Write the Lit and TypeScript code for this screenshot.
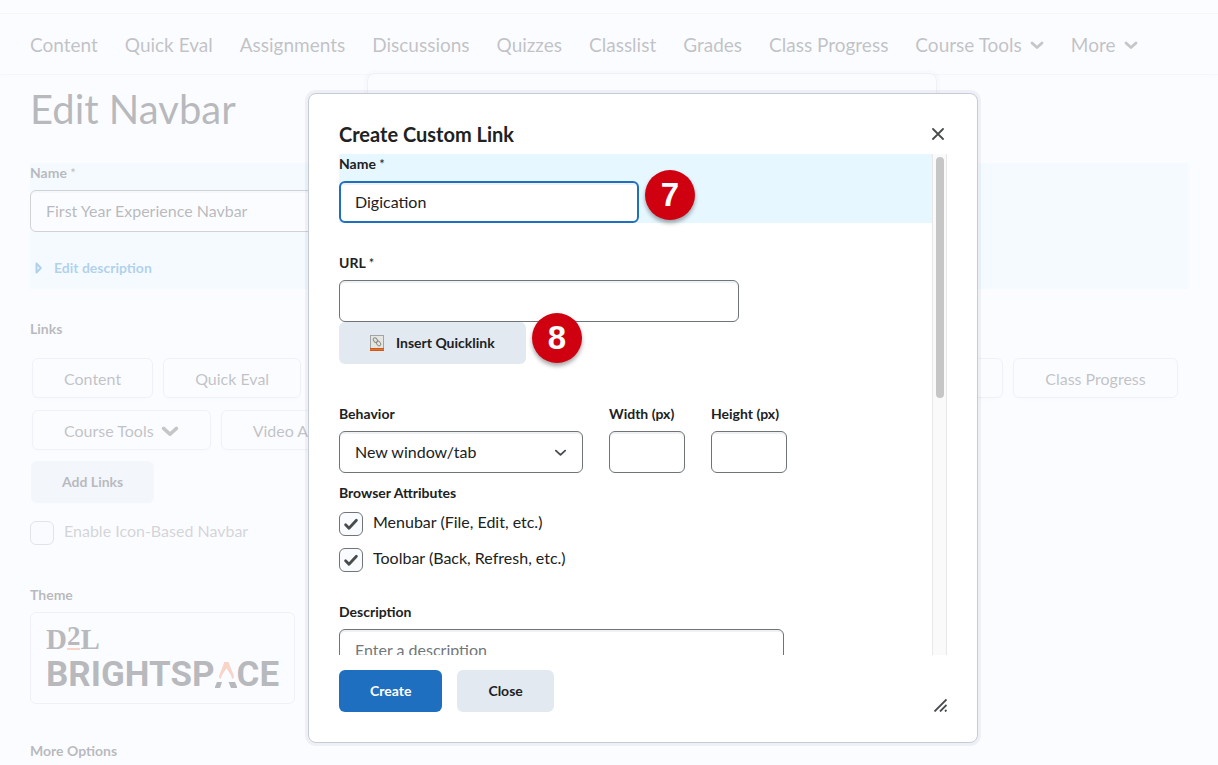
import { LitElement, html, css, svg } from "lit";
import { customElement, property, state } from "lit/decorators.js";
import { styleMap } from "lit/directives/style-map.js";

const base = css`
  *,
  *::before,
  *::after {
    box-sizing: border-box;
  }
  button,
  input,
  select,
  textarea {
    font: inherit;
    color: inherit;
    margin: 0;
  }
  .label {
    display: block;
    font-size: 14px;
    font-weight: 700;
    line-height: 20px;
    margin: 0 0 7px;
  }
  .required {
    font-size: 13px;
    font-weight: 400;
  }
  .field {
    display: block;
    height: 42px;
    padding: 0 15px 2px;
    border: 1px solid #6e7477;
    border-radius: 6px;
    background: #fff;
    box-shadow: inset 0 2px 0 rgba(177, 185, 190, 0.2);
    font-size: 16px;
    line-height: 24px;
  }
  .button {
    display: inline-flex;
    align-items: center;
    justify-content: center;
    height: 42px;
    padding: 0 31px;
    border: 0;
    border-radius: 6px;
    background: #e3e9f1;
    font-size: 14px;
    font-weight: 700;
    line-height: 20px;
    white-space: nowrap;
  }
  .check {
    display: flex;
    align-items: flex-start;
    gap: 10px;
    font-size: 16px;
    line-height: 20px;
  }
  .check input {
    appearance: none;
    width: 24px;
    height: 24px;
    border: 1px solid #6e7477;
    border-radius: 6px;
    background: #f9fbff center / 22px 22px no-repeat;
  }
  .check input:checked {
    background-image: url("data:image/svg+xml,%3Csvg xmlns='http://www.w3.org/2000/svg' viewBox='0 0 22 22'%3E%3Cpath d='M5.6 11.7l3.4 3.5 7.4-7.9' fill='none' stroke='%23494c4e' stroke-width='2.8' stroke-linecap='round' stroke-linejoin='round'/%3E%3C/svg%3E");
  }
`;

const chevron = (size: number, width: number) => html`
  <svg width=${size} height=${size} viewBox="0 0 14 14" aria-hidden="true">
    ${svg`<path d="M2 5l5 4.500 5-4.500" fill="none" stroke="#494c4e" stroke-width=${width} stroke-linecap="round" stroke-linejoin="round"/>`}
  </svg>
`;

@customElement("course-nav")
class CourseNav extends LitElement {
  static styles = [
    base,
    css`
      :host {
        display: block;
        padding-top: 13px;
      }
      .bar {
        display: flex;
        align-items: center;
        gap: 27px;
        height: 62px;
        padding: 2px 30px 0;
        border-top: 1px solid #e6eaf0;
        border-bottom: 1px solid #e6eaf0;
        box-shadow: 0 2px 3px rgba(0, 0, 0, 0.02);
        white-space: nowrap;
      }
      .item {
        display: flex;
        align-items: center;
        gap: 8px;
        padding: 0;
        border: 0;
        background: none;
        color: #3c3e40;
        font-size: 19px;
        line-height: 28px;
        text-decoration: none;
      }
    `,
  ];

  private links = ["Content", "Quick Eval", "Assignments", "Discussions", "Quizzes", "Classlist", "Grades", "Class Progress"];
  private menus = ["Course Tools", "More"];

  render() {
    return html`<nav class="bar">
      ${this.links.map((l) => html`<a class="item" href="#">${l}</a>`)}
      ${this.menus.map((m) => html`<button class="item">${m} ${chevron(14, 2.8)}</button>`)}
    </nav>`;
  }
}

@customElement("navbar-editor")
class NavbarEditor extends LitElement {
  static styles = [
    base,
    css`
      :host {
        display: block;
        padding: 10px 30px 0;
      }
      .title {
        margin: 0;
        font-size: 40px;
        font-weight: 400;
        line-height: 48px;
      }
      .basics {
        margin-top: 30px;
        padding-bottom: 11px;
        background: #e8f8ff;
      }
      .name {
        width: 50%;
      }
      .expand {
        display: flex;
        align-items: center;
        gap: 12px;
        margin-top: 26px;
        padding: 0 5px;
        border: 0;
        background: none;
        color: #006fbf;
        font-size: 14px;
        font-weight: 700;
        line-height: 20px;
      }
      .section {
        margin-top: 30px;
      }
      .chips {
        display: flex;
        flex-wrap: wrap;
        gap: 12px 10px;
        margin: 19px 0 11px;
        padding: 0 2px;
      }
      .chip {
        display: flex;
        align-items: center;
        gap: 7px;
        height: 40px;
        padding: 2px 31px 0;
        border: 1px solid #d3d9e3;
        border-radius: 6px;
        background: #fff;
        box-shadow: 0 2px 4px rgba(0, 0, 0, 0.03);
        color: #3c3e40;
        font-size: 16px;
        line-height: 24px;
        white-space: nowrap;
      }
      .add {
        margin-left: 1px;
      }
      .check {
        margin-top: 18px;
        opacity: 0.6;
      }
      .theme {
        margin-top: 40px;
      }
      .card {
        width: 265px;
        height: 92px;
        padding: 10px 15px;
        border: 1px solid #d3d9e3;
        border-radius: 6px;
        background: #fff;
      }
      .d2l {
        display: flex;
        height: 31px;
        font-family: "Liberation Serif", serif;
        font-size: 29px;
        font-weight: 700;
        line-height: 32px;
      }
      .two {
        height: 27px;
        border-bottom: 2px solid #f27b45;
        font-size: 27px;
        line-height: 27px;
      }
      .brand {
        display: flex;
        align-items: center;
        font-family: Roboto, sans-serif;
        font-size: 35px;
        font-weight: 700;
        line-height: 42px;
      }
      .brand svg {
        flex: none;
      }
      .more {
        margin-top: 37px;
      }
      .more .label {
        margin: 0;
      }
    `,
  ];

  private chips = ["Content", "Quick Eval", "Assignments", "Discussions", "Quizzes", "Classlist", "Grades", "Class Progress"];

  render() {
    return html`
      <h1 class="title">Edit Navbar</h1>
      <section class="basics">
        <label class="label" for="navbar-name">Name <span class="required">*</span></label>
        <input class="field name" id="navbar-name" value="First Year Experience Navbar" />
        <button class="expand">
          <svg width="7" height="12" viewBox="0 0 7 12" aria-hidden="true">
            <path d="M1.500 1.500v9L5.8 6z" fill="none" stroke="#006fbf" stroke-width="2" stroke-linejoin="round" />
          </svg>
          Edit description
        </button>
      </section>
      <section class="section">
        <h2 class="label">Links</h2>
        <div class="chips">
          ${this.chips.map((c) => html`<button class="chip">${c}</button>`)}
          <button class="chip">Course Tools ${chevron(18, 2.8)}</button>
          <button class="chip">Video Assignments</button>
        </div>
        <button class="button add">Add Links</button>
        <label class="check"><input type="checkbox" />Enable Icon-Based Navbar</label>
      </section>
      <section class="theme">
        <h2 class="label">Theme</h2>
        <div class="card">
          <div class="d2l">D<span class="two">2</span>L</div>
          <div class="brand">
            <span>BRIGHTSP</span>
            <svg width="22" height="26" viewBox="0 0 22 26" aria-hidden="true">
              <path d="M4 15.500C4 12 8 5 9.300 0h4.400C15 5 19 12 19 15.500L17 17C16.500 12 12.500 9 11.500 6 10.500 9 6.500 12 6 17z" fill="#f27b45" />
              <path d="M2 20h5l-2 6H-.5zM13.500 20h6.500l2.500 6H16z" fill="#202122" />
            </svg>
            <span>CE</span>
          </div>
        </div>
      </section>
      <section class="more"><h2 class="label">More Options</h2></section>
    `;
  }
}

@customElement("step-badge")
class StepBadge extends LitElement {
  @property() step = "";
  static styles = css`
    :host {
      display: flex;
      align-items: center;
      justify-content: center;
      width: 50px;
      height: 50px;
      border-radius: 50%;
      background: #cf0010;
      box-shadow: 0 3px 4px rgba(0, 0, 0, 0.35);
      color: #fff;
      font: 700 33px/50px "Liberation Sans", Arial, sans-serif;
    }
  `;
  render() {
    return html`${this.step}`;
  }
}

@customElement("custom-link-dialog")
class CustomLinkDialog extends LitElement {
  @state() private thumbSize = 49;
  @state() private thumbTop = 0;

  static styles = [
    base,
    css`
      :host {
        display: flex;
        flex-direction: column;
        box-sizing: border-box;
        padding: 26px 30px 30px;
        border: 1px solid #c5ccd8;
        border-radius: 8px;
        background: #fff;
        box-shadow: 0 0 0 3px rgba(70, 80, 110, 0.07);
      }
      .head {
        display: flex;
        align-items: center;
        justify-content: space-between;
        height: 28px;
        margin-bottom: 6px;
      }
      .title {
        margin: 0;
        font-size: 20px;
        font-weight: 700;
        line-height: 28px;
      }
      .icon-button {
        display: flex;
        padding: 3px;
        border: 0;
        background: none;
      }
      .body {
        display: flex;
        height: 501px;
      }
      .scroll {
        flex: 1;
        min-width: 0;
        overflow-y: auto;
        scrollbar-width: none;
      }
      .track {
        width: 15px;
        padding: 3px;
        border: solid #e8e8e8;
        border-width: 0 1px;
        background: #fafafa;
      }
      .thumb {
        position: relative;
        width: 8px;
        border-radius: 4px;
        background: #c6c6c6;
      }
      .name-row {
        background: #e6f7ff;
      }
      .name {
        width: 300px;
        border: 2px solid #1f6fc0;
        padding: 0 14px 2px;
      }
      .group {
        margin-top: 30px;
      }
      .url {
        width: 400px;
      }
      .quick {
        gap: 12px;
      }
      .window {
        display: flex;
        gap: 26px;
        margin-top: 40px;
      }
      .picker {
        display: grid;
        align-items: center;
      }
      .picker > * {
        grid-area: 1 / 1;
      }
      .picker svg {
        justify-self: end;
        margin-right: 16px;
        pointer-events: none;
      }
      .behavior {
        width: 244px;
        padding: 0 15px;
        appearance: none;
      }
      .size {
        width: 76px;
      }
      .attributes {
        display: grid;
        gap: 12px;
        margin: 10px 0 0;
        padding: 0;
        border: 0;
      }
      .attributes .label {
        margin: 0 0 9px;
        padding: 0;
      }
      .description {
        width: 445px;
        height: 556px;
        padding: 8px 15px;
        resize: none;
      }
      .description::placeholder {
        color: #72777a;
        opacity: 1;
      }
      .foot {
        display: flex;
        gap: 15px;
        margin-top: 15px;
      }
      .primary {
        background: #1f6fc0;
        color: #fff;
      }
      .grip {
        align-self: flex-end;
        margin-left: auto;
      }
    `,
  ];

  firstUpdated() {
    this.syncThumb();
  }

  private syncThumb() {
    const el = this.renderRoot.querySelector(".scroll") as HTMLElement;
    this.thumbSize = (el.clientHeight / el.scrollHeight) * 100;
    this.thumbTop = (el.scrollTop / el.scrollHeight) * (el.clientHeight - 6);
  }

  render() {
    return html`
      <header class="head">
        <h2 class="title">Create Custom Link</h2>
        <button class="icon-button" aria-label="Close dialog">
          <svg width="12" height="12" viewBox="0 0 12 12" aria-hidden="true">
            <path d="M1 1l10 10M11 1L1 11" stroke="#494c4e" stroke-width="1.8" stroke-linecap="round" />
          </svg>
        </button>
      </header>
      <div class="body">
        <div class="scroll" @scroll=${this.syncThumb}>
          <div class="name-row">
            <label class="label" for="name">Name <span class="required">*</span></label>
            <input class="field name" id="name" value="Digication" />
          </div>
          <div class="group">
            <label class="label" for="url">URL <span class="required">*</span></label>
            <input class="field url" id="url" />
            <button class="button quick">
              <svg width="14" height="16" viewBox="0 0 14 16" aria-hidden="true">
                <rect x=".5" y=".5" width="13" height="13" fill="#e6e6e0" stroke="#a2a5a8" />
                <path d="M0 13h14v3H0z" fill="#c9591c" />
                <path d="M0 14h14v1H0z" fill="#e8742a" />
                <g fill="none" stroke="#8a8a86" stroke-width="1">
                  <rect x="3.700" y="2.600" width="3.400" height="5" rx="1.700" transform="rotate(-40 5.400 5.100)" />
                  <rect x="6.900" y="6" width="3.400" height="5" rx="1.700" transform="rotate(-40 8.600 8.500)" />
                </g>
              </svg>
              Insert Quicklink
            </button>
          </div>
          <div class="window">
            <div>
              <label class="label" for="behavior">Behavior</label>
              <div class="picker">
                <select class="field behavior" id="behavior">
                  <option>New window/tab</option>
                </select>
                ${chevron(13, 2)}
              </div>
            </div>
            <div>
              <label class="label" for="width">Width (px)</label>
              <input class="field size" id="width" />
            </div>
            <div>
              <label class="label" for="height">Height (px)</label>
              <input class="field size" id="height" />
            </div>
          </div>
          <fieldset class="attributes">
            <legend class="label">Browser Attributes</legend>
            <label class="check"><input type="checkbox" checked />Menubar (File, Edit, etc.)</label>
            <label class="check"><input type="checkbox" checked />Toolbar (Back, Refresh, etc.)</label>
          </fieldset>
          <div class="group">
            <label class="label" for="description">Description</label>
            <textarea class="field description" id="description" placeholder="Enter a description"></textarea>
          </div>
        </div>
        <div class="track">
          <div class="thumb" style=${styleMap({ height: `${this.thumbSize}%`, top: `${this.thumbTop}px` })}></div>
        </div>
      </div>
      <footer class="foot">
        <button class="button primary">Create</button>
        <button class="button">Close</button>
        <svg class="grip" width="14" height="14" viewBox="0 0 14 14" aria-hidden="true">
          <path d="M1.500 13.500L13.500 1.500M7 13.500L13.500 7M12 13.500L13.500 12" stroke="#494c4e" stroke-width="1.8" />
        </svg>
      </footer>
    `;
  }
}

@customElement("app-root")
class AppRoot extends LitElement {
  static styles = css`
    :host {
      display: block;
      position: relative;
      min-height: 100vh;
      overflow: hidden;
      background: #fff;
      color: #202122;
      font-family: Lato, sans-serif;
    }
    .panel {
      position: absolute;
      top: 73px;
      left: 367px;
      width: 570px;
      height: 600px;
      box-sizing: border-box;
      border: 1px solid #d3d9e3;
      border-radius: 8px;
      background: #fff;
      box-shadow: 0 0 0 3px rgba(70, 80, 110, 0.07);
    }
    .backdrop {
      position: absolute;
      inset: 0;
      background: rgba(249, 251, 255, 0.7);
    }
    .dialog {
      position: absolute;
      top: 93px;
      left: 308px;
      width: 670px;
    }
    .seven,
    .eight {
      position: absolute;
    }
    .seven {
      top: 170px;
      left: 645px;
    }
    .eight {
      top: 313px;
      left: 532px;
    }
  `;

  render() {
    return html`
      <course-nav></course-nav>
      <navbar-editor></navbar-editor>
      <div class="panel"></div>
      <div class="backdrop"></div>
      <custom-link-dialog class="dialog" role="dialog" aria-label="Create Custom Link"></custom-link-dialog>
      <step-badge class="seven" step="7"></step-badge>
      <step-badge class="eight" step="8"></step-badge>
    `;
  }
}
